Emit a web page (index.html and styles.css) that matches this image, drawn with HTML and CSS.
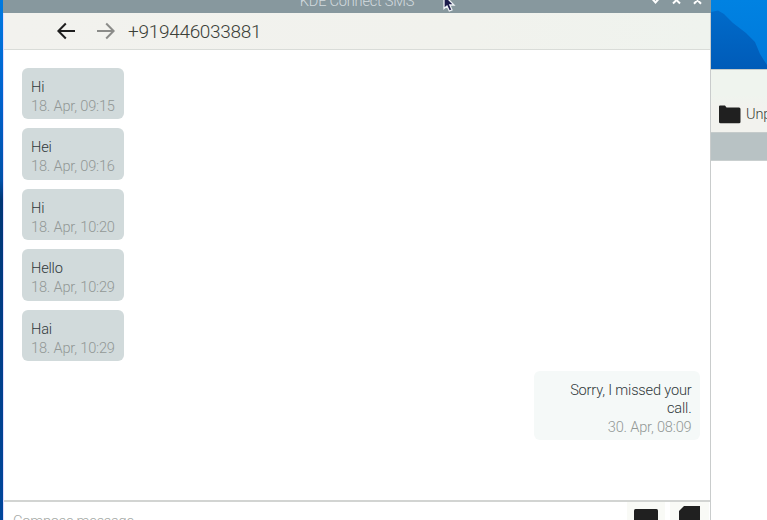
FILE: index.html
```html
<!DOCTYPE html>
<html lang="en">
<head>
<meta charset="utf-8">
<title>KDE Connect SMS</title>
<link rel="stylesheet" href="styles.css">
</head>
<body>
<main class="desktop">
  <div class="wallpaper-edge"></div>
  <section class="sms-window">
    <header class="titlebar">
      <span class="window-title">KDE Connect SMS</span>
      <div class="window-controls">
        <svg width="9" height="12" viewBox="0 0 9 12"><path d="M0.5 -2 4.5 2.4 8.5 -2"/></svg>
        <svg width="9" height="12" viewBox="0 0 9 12"><path d="M1 3.5 4.5 0 8 3.5"/></svg>
        <svg width="9" height="12" viewBox="0 0 9 12"><path d="M1.2 -3.5 8 3.8M7.8 -3.5 1 3.8"/></svg>
      </div>
      <svg class="cursor" width="14" height="20" viewBox="0 0 14 20"><path d="M2 2V15.5L5 13L7.3 18L10 16.8L7.8 12H12Z" fill="#1c1c4c" stroke="#eef2f6" stroke-width="1.3"/></svg>
    </header>
    <nav class="toolbar">
      <svg class="arrow back" width="20" height="18" viewBox="0 0 20 18"><path d="M19 9H2.5M9.8 1.5 2.4 9l7.4 7.5"/></svg>
      <svg class="arrow forward" width="20" height="18" viewBox="0 0 20 18"><path d="M1 9H17.5M10.2 1.5 17.6 9l-7.4 7.5"/></svg>
      <h1 class="contact">+919446033881</h1>
    </nav>
    <div class="messages">
      <article class="bubble"><p>Hi</p><time>18. Apr, 09:15</time></article>
      <article class="bubble"><p>Hei</p><time>18. Apr, 09:16</time></article>
      <article class="bubble"><p>Hi</p><time>18. Apr, 10:20</time></article>
      <article class="bubble"><p>Hello</p><time>18. Apr, 10:29</time></article>
      <article class="bubble"><p>Hai</p><time>18. Apr, 10:29</time></article>
      <article class="bubble sent"><p>Sorry, I missed your call.</p><time>30. Apr, 08:09</time></article>
    </div>
    <footer class="composer">
      <span class="placeholder">Compose message</span>
      <div class="action emoji"><svg width="24" height="24" viewBox="0 0 24 24"><rect width="24" height="24" rx="1.5"/></svg></div>
      <div class="action attach"><svg width="21" height="24" viewBox="0 0 21 24"><path d="M5 0H21V24H0V5Z"/></svg></div>
    </footer>
  </section>
  <aside class="background">
    <svg class="wallpaper" width="56" height="69" viewBox="0 0 56 69">
      <defs>
        <linearGradient id="sky" x2="0" y2="1"><stop stop-color="#0082e2"/><stop offset="1" stop-color="#0079da"/></linearGradient>
        <linearGradient id="ridge" x2="0" y2="1"><stop stop-color="#006bca"/><stop offset="1" stop-color="#005bb8"/></linearGradient>
      </defs>
      <rect width="56" height="69" fill="url(#sky)"/>
      <path d="M0 12 7 10.5 13 14 22 23 35 33 44 42 49 54 56 65V69H0Z" fill="url(#ridge)"/>
    </svg>
    <div class="files-bar">
      <svg width="22" height="19" viewBox="0 0 22 19"><path d="M0 1.5Q0 .5 1 .5H6L7.5 2.5H20Q21.5 2.5 21.5 4V17Q21.5 18.3 20 18.3H1.5Q0 18.3 0 17Z"/></svg>
      <span>Unpack</span>
    </div>
    <div class="files-header"></div>
    <div class="files-body"></div>
  </aside>
</main>
</body>
</html>
```
FILE: styles.css
```css
* { box-sizing: border-box; }
body { margin: 0; overflow: hidden; font: 300 14.6px/19px Roboto, "Liberation Sans", sans-serif; letter-spacing: -0.18px; }
p, h1 { margin: 0; }
.desktop { display: flex; width: 767px; height: 520px; background: #fff; }
.wallpaper-edge { width: 3px; background: linear-gradient(#007ae0 0, #0062cc 100px, #0052a9 180px, #003774 200px, #003e87 330px, #00479b 520px); }
.sms-window { display: flex; flex-direction: column; width: 708px; height: 520px; border-left: 1px solid #e2dcff; border-right: 1px solid #c9cccc; }
.titlebar { position: relative; flex: none; height: 13px; margin-left: -1px; margin-right: -1px; background: #87989e; color: #d3dbde; }
.window-title { display: block; width: 708px; margin-top: -8px; text-align: center; letter-spacing: -0.22px; }
.window-controls { position: absolute; top: 0; right: 9px; display: flex; gap: 12px; }
.window-controls path { fill: none; stroke: #fff; stroke-width: 2; }
.cursor { position: absolute; left: 439px; top: -7px; }
.toolbar { flex: none; display: flex; align-items: center; height: 37px; padding-left: 52px; background: linear-gradient(90deg, #f2f2ee, #f1f2ed 65%, #eff3ee); border-bottom: 1px solid #d9dcd8; }
.arrow { fill: none; stroke-width: 2; }
.back { stroke: #1e1e1e; }
.forward { margin-left: 20px; stroke: #8b8c89; }
.contact { margin: 1px 0 0 12px; font-size: 19px; line-height: 24px; font-weight: 300; letter-spacing: -0.3px; color: #3b4038; }
.messages { flex: 1; min-height: 0; display: flex; flex-direction: column; align-items: flex-start; gap: 9px; padding: 17.5px 10px 0 18px; }
.bubble { flex: none; width: 102px; height: 51.6px; padding: 10px 0 0 9px; border-radius: 6px; background: #d1dadb; color: #30383a; white-space: nowrap; }
.bubble time { display: block; color: #929896; }
.sent { align-self: flex-end; width: 166px; height: 69px; margin-top: 1px; padding: 9.5px 8.5px 0 20px; background: #f5f9f8; text-align: right; white-space: normal; }
.sent p { line-height: 18.5px; }
.composer { flex: none; display: flex; height: 20px; border-top: 2px solid #d2d4d2; padding-left: 9px; overflow: hidden; }
.placeholder { flex: 1; padding-top: 10px; letter-spacing: -0.22px; color: #a6aaa6; }
.action { display: flex; height: 30px; background: #f9faf6; fill: #202020; }
.emoji { width: 38px; padding: 7px 0 0 7px; margin-right: 5px; }
.attach { width: 39px; padding: 4px 0 0 9px; margin-right: 1px; }
.background { width: 56px; overflow: hidden; }
.wallpaper { display: block; }
.files-bar { display: flex; align-items: flex-end; gap: 5px; height: 63px; padding: 0 0 8px 8px; border-top: 1px solid #c5cbcb; background: linear-gradient(#eff4ee 40%, #f2f2ee 60%); color: #3b4038; white-space: nowrap; }
.files-bar svg { flex: none; margin-bottom: 0; fill: #202020; }
.files-header { height: 29px; background: #b8c2c4; border-top: 1px solid #c5cbcb; border-bottom: 1px solid #c9cfcf; }
.files-body { height: 359px; background: #fff; }
```
